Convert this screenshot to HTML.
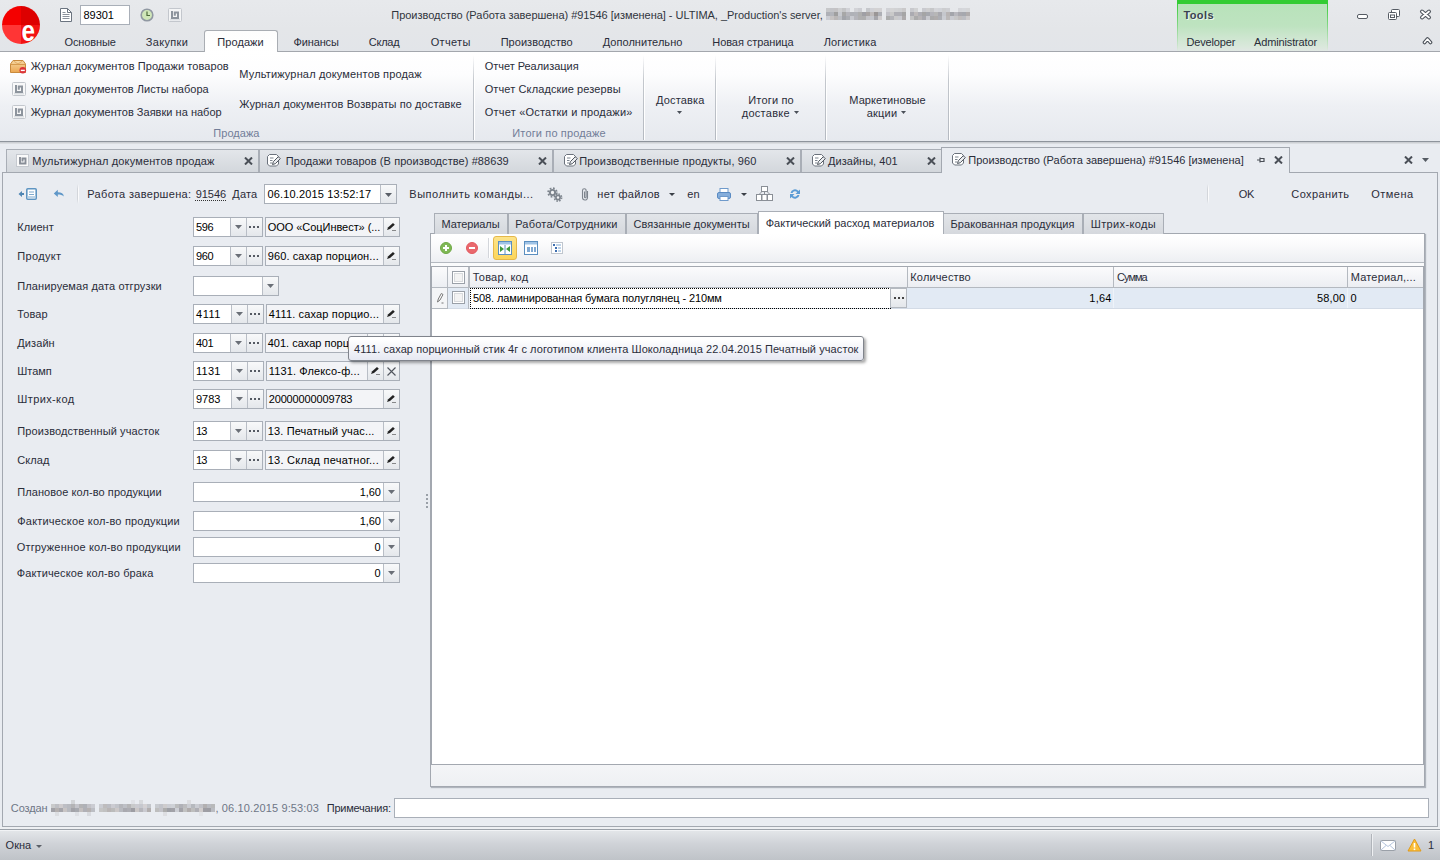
<!DOCTYPE html>
<html lang="ru"><head><meta charset="utf-8"><title>ULTIMA</title>
<style>
html,body{margin:0;padding:0;}
body{width:1440px;height:860px;overflow:hidden;background:#e9ecf1;font-family:"Liberation Sans",sans-serif;font-size:11px;color:#1e1e1e;}
#app{position:relative;width:1440px;height:860px;overflow:hidden;}
#app div,#app span,#app svg{position:absolute;box-sizing:border-box;}
.t{white-space:nowrap;line-height:13px;font-size:11px;}
.c{transform:translateX(-50%);}
.in{background:#fff;border:1px solid #a9afb8;}
.ro{background:#f3f4f7;border:1px solid #a9afb8;}
.btn{background:linear-gradient(#f8f9fa,#e4e7eb);border-left:1px solid #b9bec6;}

</style></head>
<body>
<div id="app">
<div style="left:0px;top:0px;width:1440px;height:52px;background:linear-gradient(#e7e9ec 0%,#e4e6e9 55%,#e2e5e9 100%);"></div>
<div style="left:1177px;top:0px;width:151px;height:52px;background:linear-gradient(#b7e2b9 0%,#bee3c0 50%,#dae8dc 90%,#e2e7e5 100%);"></div>
<div style="left:1177px;top:0px;width:151px;height:4px;background:#33cc33;"></div>
<span class="t" style="left:1183.5px;top:9px;letter-spacing:0.371px;font-weight:bold;color:#3a4350;text-shadow:1px 1px 0 rgba(255,255,255,0.75);">Tools</span>
<div style="left:1177px;top:4px;width:1px;height:47px;background:linear-gradient(#3ccc3c,rgba(120,210,120,0.5) 60%,rgba(200,230,200,0));"></div>
<div style="left:1327px;top:4px;width:1px;height:47px;background:linear-gradient(#3ccc3c,rgba(120,210,120,0.5) 60%,rgba(200,230,200,0));"></div>
<span class="t" style="left:1186.5px;top:36px;letter-spacing:-0.154px;color:#2a2d3a">Developer</span>
<span class="t" style="left:1254px;top:36px;letter-spacing:-0.141px;color:#2a2d3a">Administrator</span>
<div style="left:0px;top:51px;width:1440px;height:1px;background:#a3a7ad;"></div>
<svg style="left:1px;top:5px" width="40" height="40" viewBox="0 0 40 40"><defs><clipPath id="cc"><circle cx="20" cy="20" r="19"/></clipPath></defs>
<g clip-path="url(#cc)"><rect x="0" y="0" width="20" height="20" fill="#f40000"/><rect x="20" y="0" width="20" height="20" fill="#dd0000"/>
<rect x="0" y="20" width="20" height="20" fill="#ff3535"/><rect x="20" y="20" width="20" height="20" fill="#f21313"/>
<text x="20.500" y="35.500" font-family="Liberation Sans, sans-serif" font-size="29" font-weight="bold" fill="#fff" textLength="13.500" lengthAdjust="spacingAndGlyphs">e</text></g></svg>
<svg style="left:59px;top:7px" width="14" height="16" viewBox="0 0 14 16"><path d="M1.5 1.5h7l4 4v9h-11z" fill="#fff" stroke="#6b7480"/><path d="M8.5 1.5v4h4" fill="none" stroke="#6b7480"/><path d="M3.5 7.5h7M3.5 9.5h7M3.5 11.5h7M3.5 5.5h3" stroke="#8a919b"/></svg>
<div class="in" style="left:80px;top:5px;width:50px;height:20px;"></div>
<span class="t" style="left:83.5px;top:9px;letter-spacing:-0.046px;color:#000;">89301</span>
<svg style="left:140px;top:8px" width="14" height="14" viewBox="0 0 14 14"><circle cx="7" cy="7" r="5.800" fill="#cfe6b8" stroke="#9098a2" stroke-width="1.600"/><path d="M7 3.500v4h3" fill="none" stroke="#4d6b3a" stroke-width="1.200"/></svg>
<svg style="left:168px;top:8px" width="14" height="14" viewBox="0 0 14 14"><rect x="0.5" y="0.5" width="13" height="13" rx="1" fill="#f4f5f6" stroke="#c3c7cd"/><rect x="2" y="10.500" width="10" height="2" fill="#dcdfe3"/><path d="M4 3v7h6v-5.500h-3.200v3.200" fill="none" stroke="#8d949d" stroke-width="2"/></svg>
<span class="t" style="left:391.3px;top:9px;letter-spacing:-0.028px;color:#30353d;">Производство (Работа завершена) #91546 [изменена] - ULTIMA, _Production's server,</span>
<svg style="left:826px;top:8px" width="144" height="12" viewBox="0 0 144 12"><rect x="0" y="0" width="4" height="4" fill="rgb(198,199,201)"/><rect x="4" y="0" width="4" height="4" fill="rgb(195,196,200)"/><rect x="8" y="0" width="4" height="4" fill="rgb(196,195,197)"/><rect x="12" y="0" width="4" height="4" fill="rgb(206,207,209)"/><rect x="16" y="0" width="4" height="4" fill="rgb(196,197,199)"/><rect x="20" y="0" width="4" height="4" fill="rgb(209,210,215)"/><rect x="28" y="0" width="4" height="4" fill="rgb(210,211,215)"/><rect x="32" y="0" width="4" height="4" fill="rgb(204,205,210)"/><rect x="40" y="0" width="4" height="4" fill="rgb(197,199,203)"/><rect x="44" y="0" width="4" height="4" fill="rgb(208,209,214)"/><rect x="48" y="0" width="4" height="4" fill="rgb(211,210,211)"/><rect x="52" y="0" width="4" height="4" fill="rgb(211,210,212)"/><rect x="60" y="0" width="4" height="4" fill="rgb(209,210,214)"/><rect x="64" y="0" width="4" height="4" fill="rgb(212,212,213)"/><rect x="68" y="0" width="4" height="4" fill="rgb(209,210,212)"/><rect x="72" y="0" width="4" height="4" fill="rgb(207,208,210)"/><rect x="76" y="0" width="4" height="4" fill="rgb(202,201,202)"/><rect x="84" y="0" width="4" height="4" fill="rgb(200,201,205)"/><rect x="88" y="0" width="4" height="4" fill="rgb(209,210,211)"/><rect x="96" y="0" width="4" height="4" fill="rgb(201,202,207)"/><rect x="100" y="0" width="4" height="4" fill="rgb(206,206,207)"/><rect x="104" y="0" width="4" height="4" fill="rgb(198,199,201)"/><rect x="108" y="0" width="4" height="4" fill="rgb(212,213,217)"/><rect x="112" y="0" width="4" height="4" fill="rgb(209,211,216)"/><rect x="116" y="0" width="4" height="4" fill="rgb(204,205,207)"/><rect x="120" y="0" width="4" height="4" fill="rgb(206,207,211)"/><rect x="132" y="0" width="4" height="4" fill="rgb(212,213,217)"/><rect x="136" y="0" width="4" height="4" fill="rgb(213,215,219)"/><rect x="140" y="0" width="4" height="4" fill="rgb(213,214,216)"/><rect x="0" y="4" width="4" height="4" fill="rgb(174,176,182)"/><rect x="4" y="4" width="4" height="4" fill="rgb(179,181,187)"/><rect x="8" y="4" width="4" height="4" fill="rgb(159,159,159)"/><rect x="12" y="4" width="4" height="4" fill="rgb(199,201,207)"/><rect x="16" y="4" width="4" height="4" fill="rgb(167,167,167)"/><rect x="20" y="4" width="4" height="4" fill="rgb(181,181,187)"/><rect x="24" y="4" width="4" height="4" fill="rgb(175,177,183)"/><rect x="28" y="4" width="4" height="4" fill="rgb(177,179,185)"/><rect x="32" y="4" width="4" height="4" fill="rgb(174,174,174)"/><rect x="36" y="4" width="4" height="4" fill="rgb(159,159,165)"/><rect x="40" y="4" width="4" height="4" fill="rgb(168,164,164)"/><rect x="44" y="4" width="4" height="4" fill="rgb(191,187,187)"/><rect x="48" y="4" width="4" height="4" fill="rgb(154,150,150)"/><rect x="52" y="4" width="4" height="4" fill="rgb(173,175,181)"/><rect x="60" y="4" width="4" height="4" fill="rgb(194,194,200)"/><rect x="64" y="4" width="4" height="4" fill="rgb(201,201,201)"/><rect x="68" y="4" width="4" height="4" fill="rgb(175,175,181)"/><rect x="72" y="4" width="4" height="4" fill="rgb(175,175,181)"/><rect x="76" y="4" width="4" height="4" fill="rgb(165,165,165)"/><rect x="84" y="4" width="4" height="4" fill="rgb(171,171,177)"/><rect x="88" y="4" width="4" height="4" fill="rgb(190,186,186)"/><rect x="92" y="4" width="4" height="4" fill="rgb(173,173,179)"/><rect x="96" y="4" width="4" height="4" fill="rgb(165,165,165)"/><rect x="100" y="4" width="4" height="4" fill="rgb(166,168,174)"/><rect x="104" y="4" width="4" height="4" fill="rgb(180,180,186)"/><rect x="108" y="4" width="4" height="4" fill="rgb(183,183,183)"/><rect x="112" y="4" width="4" height="4" fill="rgb(169,169,175)"/><rect x="116" y="4" width="4" height="4" fill="rgb(197,199,205)"/><rect x="120" y="4" width="4" height="4" fill="rgb(184,180,180)"/><rect x="124" y="4" width="4" height="4" fill="rgb(163,165,171)"/><rect x="128" y="4" width="4" height="4" fill="rgb(184,184,190)"/><rect x="132" y="4" width="4" height="4" fill="rgb(169,169,175)"/><rect x="136" y="4" width="4" height="4" fill="rgb(166,168,174)"/><rect x="140" y="4" width="4" height="4" fill="rgb(176,172,172)"/><rect x="0" y="8" width="4" height="4" fill="rgb(203,205,211)"/><rect x="4" y="8" width="4" height="4" fill="rgb(198,195,195)"/><rect x="8" y="8" width="4" height="4" fill="rgb(186,183,183)"/><rect x="12" y="8" width="4" height="4" fill="rgb(188,190,195)"/><rect x="16" y="8" width="4" height="4" fill="rgb(162,164,170)"/><rect x="20" y="8" width="4" height="4" fill="rgb(172,174,179)"/><rect x="24" y="8" width="4" height="4" fill="rgb(200,202,208)"/><rect x="28" y="8" width="4" height="4" fill="rgb(181,181,187)"/><rect x="32" y="8" width="4" height="4" fill="rgb(175,175,176)"/><rect x="36" y="8" width="4" height="4" fill="rgb(174,174,175)"/><rect x="40" y="8" width="4" height="4" fill="rgb(195,195,200)"/><rect x="44" y="8" width="4" height="4" fill="rgb(196,198,204)"/><rect x="48" y="8" width="4" height="4" fill="rgb(166,166,171)"/><rect x="52" y="8" width="4" height="4" fill="rgb(207,204,205)"/><rect x="60" y="8" width="4" height="4" fill="rgb(172,173,173)"/><rect x="64" y="8" width="4" height="4" fill="rgb(179,180,185)"/><rect x="68" y="8" width="4" height="4" fill="rgb(202,202,203)"/><rect x="72" y="8" width="4" height="4" fill="rgb(201,202,207)"/><rect x="76" y="8" width="4" height="4" fill="rgb(173,170,171)"/><rect x="84" y="8" width="4" height="4" fill="rgb(195,195,195)"/><rect x="88" y="8" width="4" height="4" fill="rgb(171,171,171)"/><rect x="92" y="8" width="4" height="4" fill="rgb(183,180,181)"/><rect x="96" y="8" width="4" height="4" fill="rgb(168,168,174)"/><rect x="100" y="8" width="4" height="4" fill="rgb(200,201,206)"/><rect x="104" y="8" width="4" height="4" fill="rgb(170,170,171)"/><rect x="108" y="8" width="4" height="4" fill="rgb(175,172,172)"/><rect x="112" y="8" width="4" height="4" fill="rgb(172,174,180)"/><rect x="116" y="8" width="4" height="4" fill="rgb(202,204,210)"/><rect x="120" y="8" width="4" height="4" fill="rgb(187,184,184)"/><rect x="124" y="8" width="4" height="4" fill="rgb(201,203,209)"/><rect x="128" y="8" width="4" height="4" fill="rgb(199,199,200)"/><rect x="132" y="8" width="4" height="4" fill="rgb(192,189,189)"/><rect x="136" y="8" width="4" height="4" fill="rgb(189,190,195)"/><rect x="140" y="8" width="4" height="4" fill="rgb(206,203,204)"/></svg>
<svg style="left:1356px;top:8px" width="80" height="14" viewBox="0 0 80 14"><rect x="1.500" y="6.5" width="10" height="4" rx="1.5" fill="#fff" stroke="#555b63"/>
<rect x="35.5" y="1.5" width="8" height="7" rx="1" fill="#fff" stroke="#555b63"/><rect x="32.5" y="4.5" width="8" height="7" rx="1" fill="#fff" stroke="#555b63"/><rect x="34.5" y="7" width="4" height="2.500" fill="none" stroke="#555b63"/>
<path d="M66 3.500l7 6M73 3.500l-7 6" fill="none" stroke="#4f555d" stroke-width="4" stroke-linecap="round"/><path d="M66 3.500l7 6M73 3.500l-7 6" fill="none" stroke="#fff" stroke-width="1.800" stroke-linecap="round"/></svg>
<svg style="left:1422px;top:36px" width="11" height="9" viewBox="0 0 11 9"><path d="M2.500 6.500l3-3.500 3 3.500" fill="none" stroke="#4a5058" stroke-width="3.600" stroke-linecap="round" stroke-linejoin="round"/><path d="M2.500 6.500l3-3.500 3 3.500" fill="none" stroke="#fff" stroke-width="1.500" stroke-linecap="round" stroke-linejoin="round"/></svg>
<div style="left:204px;top:30px;width:74px;height:23px;border:1px solid #a9adb3;border-bottom:none;border-radius:3px 3px 0 0;background:linear-gradient(#fdfdfd,#fff);"></div>
<span class="t" style="left:64.5px;top:36px;letter-spacing:-0.113px;color:#2a2d3a">Основные</span>
<span class="t" style="left:145.8px;top:36px;letter-spacing:0.315px;color:#2a2d3a">Закупки</span>
<span class="t" style="left:217.3px;top:36px;letter-spacing:0.077px;color:#2a2d3a">Продажи</span>
<span class="t" style="left:293.5px;top:36px;letter-spacing:-0.130px;color:#2a2d3a">Финансы</span>
<span class="t" style="left:368.7px;top:36px;letter-spacing:-0.209px;color:#2a2d3a">Склад</span>
<span class="t" style="left:430.7px;top:36px;letter-spacing:0.336px;color:#2a2d3a">Отчеты</span>
<span class="t" style="left:500.7px;top:36px;letter-spacing:0.026px;color:#2a2d3a">Производство</span>
<span class="t" style="left:602.7px;top:36px;letter-spacing:0.044px;color:#2a2d3a">Дополнительно</span>
<span class="t" style="left:712.3px;top:36px;letter-spacing:-0.071px;color:#2a2d3a">Новая страница</span>
<span class="t" style="left:823.7px;top:36px;letter-spacing:0.169px;color:#2a2d3a">Логистика</span>
<div style="left:0px;top:52px;width:1440px;height:89px;background:linear-gradient(#ffffff 0%,#fdfdfe 25%,#eef0f4 60%,#e6e9ee 100%);"></div>
<div style="left:0px;top:141px;width:1440px;height:1px;background:#8e949c;"></div>
<div style="left:0px;top:142px;width:1440px;height:2px;background:linear-gradient(#c5c8cd,#e1e4e8);"></div>
<div style="left:473px;top:55px;width:1px;height:85px;background:linear-gradient(rgba(190,195,202,0),#c3c7cd 30%,#b4b9c0 100%);"></div>
<div style="left:474px;top:55px;width:1px;height:85px;background:linear-gradient(rgba(255,255,255,0),#fff 30%);"></div>
<div style="left:643px;top:55px;width:1px;height:85px;background:linear-gradient(rgba(190,195,202,0),#c3c7cd 30%,#b4b9c0 100%);"></div>
<div style="left:644px;top:55px;width:1px;height:85px;background:linear-gradient(rgba(255,255,255,0),#fff 30%);"></div>
<div style="left:715px;top:55px;width:1px;height:85px;background:linear-gradient(rgba(190,195,202,0),#c3c7cd 30%,#b4b9c0 100%);"></div>
<div style="left:716px;top:55px;width:1px;height:85px;background:linear-gradient(rgba(255,255,255,0),#fff 30%);"></div>
<div style="left:825px;top:55px;width:1px;height:85px;background:linear-gradient(rgba(190,195,202,0),#c3c7cd 30%,#b4b9c0 100%);"></div>
<div style="left:826px;top:55px;width:1px;height:85px;background:linear-gradient(rgba(255,255,255,0),#fff 30%);"></div>
<div style="left:948px;top:55px;width:1px;height:85px;background:linear-gradient(rgba(190,195,202,0),#c3c7cd 30%,#b4b9c0 100%);"></div>
<div style="left:949px;top:55px;width:1px;height:85px;background:linear-gradient(rgba(255,255,255,0),#fff 30%);"></div>
<svg style="left:10px;top:59px" width="17" height="15" viewBox="0 0 17 15"><defs><linearGradient id="bx" x1="0" y1="0" x2="0" y2="1"><stop offset="0" stop-color="#f7d9a4"/><stop offset="1" stop-color="#eba650"/></linearGradient></defs>
<path d="M0.500 5l2.500-3.500h10l2.500 3.500v8.500h-15z" fill="url(#bx)" stroke="#c98a3c"/><path d="M0.500 5.500h15" stroke="#d59a4e"/><path d="M3.500 2l4.500 3 4.500-3" fill="none" stroke="#dba35a" stroke-width="0.800"/>
<circle cx="12.800" cy="11.300" r="3.300" fill="#dc3338"/><rect x="10.800" y="10.700" width="4" height="1.400" fill="#fff"/></svg>
<svg style="left:12px;top:82px" width="14" height="14" viewBox="0 0 14 14"><rect x="0.5" y="0.5" width="13" height="13" rx="1" fill="#f8f8f9" stroke="#c3c7cd"/><rect x="2" y="10.500" width="10" height="2" fill="#dcdfe3"/><path d="M4 3v7h6v-5.500h-3.200v3.200" fill="none" stroke="#8d949d" stroke-width="2"/></svg>
<svg style="left:12px;top:105px" width="14" height="14" viewBox="0 0 14 14"><rect x="0.5" y="0.5" width="13" height="13" rx="1" fill="#f8f8f9" stroke="#c3c7cd"/><rect x="2" y="10.500" width="10" height="2" fill="#dcdfe3"/><path d="M4 3v7h6v-5.500h-3.200v3.200" fill="none" stroke="#8d949d" stroke-width="2"/></svg>
<span class="t" style="left:30.7px;top:60px;letter-spacing:0.073px;color:#2a2d3a">Журнал документов Продажи товаров</span>
<span class="t" style="left:30.7px;top:83px;letter-spacing:0.019px;color:#2a2d3a">Журнал документов Листы набора</span>
<span class="t" style="left:30.7px;top:106px;letter-spacing:0.023px;color:#2a2d3a">Журнал документов Заявки на набор</span>
<span class="t" style="left:239.3px;top:68px;letter-spacing:0.150px;color:#2a2d3a">Мультижурнал документов продаж</span>
<span class="t" style="left:239.3px;top:98px;letter-spacing:0.091px;color:#2a2d3a">Журнал документов Возвраты по доставке</span>
<span class="t" style="left:213.3px;top:127px;letter-spacing:0.032px;color:#727d98">Продажа</span>
<span class="t" style="left:484.7px;top:60px;letter-spacing:-0.026px;color:#2a2d3a">Отчет Реализация</span>
<span class="t" style="left:484.7px;top:83px;letter-spacing:0.112px;color:#2a2d3a">Отчет Складские резервы</span>
<span class="t" style="left:484.7px;top:106px;letter-spacing:0.217px;color:#2a2d3a">Отчет «Остатки и продажи»</span>
<span class="t" style="left:512.3px;top:127px;letter-spacing:0.144px;color:#727d98">Итоги по продаже</span>
<span class="t" style="left:656px;top:94px;letter-spacing:0.166px;color:#2a2d3a">Доставка</span>
<span class="t" style="left:748.3px;top:94px;letter-spacing:0.168px;color:#2a2d3a">Итоги по</span>
<span class="t" style="left:741.7px;top:107px;letter-spacing:0.291px;color:#2a2d3a">доставке</span>
<span class="t" style="left:849.3px;top:94px;letter-spacing:0.086px;color:#2a2d3a">Маркетиновые</span>
<span class="t" style="left:866.7px;top:107px;letter-spacing:0.220px;color:#2a2d3a">акции</span>
<svg style="left:677px;top:111px" width="5" height="3" viewBox="0 0 5 3"><path d="M0 0h5l-2.5 3z" fill="#4a5058"/></svg>
<svg style="left:794px;top:111px" width="5" height="3" viewBox="0 0 5 3"><path d="M0 0h5l-2.5 3z" fill="#4a5058"/></svg>
<svg style="left:901px;top:111px" width="5" height="3" viewBox="0 0 5 3"><path d="M0 0h5l-2.5 3z" fill="#4a5058"/></svg>
<div style="left:6px;top:149px;width:253px;height:23px;background:linear-gradient(#e3e6ea,#d3d7dc);border:1px solid #a9aeb6;border-bottom:none;"></div>
<div style="left:259px;top:149px;width:294px;height:23px;background:linear-gradient(#e3e6ea,#d3d7dc);border:1px solid #a9aeb6;border-bottom:none;"></div>
<div style="left:553px;top:149px;width:248px;height:23px;background:linear-gradient(#e3e6ea,#d3d7dc);border:1px solid #a9aeb6;border-bottom:none;"></div>
<div style="left:801px;top:149px;width:141px;height:23px;background:linear-gradient(#e3e6ea,#d3d7dc);border:1px solid #a9aeb6;border-bottom:none;"></div>
<div style="left:2px;top:172px;width:1436px;height:655px;background:#e9ecf1;border:1px solid #a3a8b0;"></div>
<div style="left:941px;top:147px;width:349px;height:26px;background:#e9ecf1;border:1px solid #a3a8b0;border-bottom:none;"></div>
<svg style="left:16px;top:154px" width="13" height="13" viewBox="0 0 13 13"><rect x="0.5" y="0.5" width="12" height="12" fill="#fafafa" stroke="#c5c9cf"/><path d="M4 3v6.500h5.500v-5h-3v3" fill="none" stroke="#888e97" stroke-width="1.900"/></svg>
<span class="t" style="left:32.3px;top:155px;letter-spacing:0.140px;color:#2a2d3a">Мультижурнал документов продаж</span>
<svg style="left:244px;top:157px" width="9" height="8" viewBox="0 0 9 8"><path d="M1 0.500l7 7M8 0.500l-7 7" stroke="#4a4f57" stroke-width="2"/></svg>
<svg style="left:266px;top:153px" width="15" height="14" viewBox="0 0 15 14"><path d="M3.500 1.500h7l2 2v7.500l-2 2h-7l-2-2v-7.500z" fill="#fff" stroke="#6b727c"/><path d="M4 5h3.500M4 7.500h2.500M4 10h2" stroke="#7d858f"/>
<path d="M6.500 11.500l0.800-2.800 5-5 2 2-5 5z" fill="#e9ebee" stroke="#4f565f"/></svg>
<span class="t" style="left:285.7px;top:155px;letter-spacing:0.073px;color:#2a2d3a">Продажи товаров (В производстве) #88639</span>
<svg style="left:538px;top:157px" width="9" height="8" viewBox="0 0 9 8"><path d="M1 0.500l7 7M8 0.500l-7 7" stroke="#4a4f57" stroke-width="2"/></svg>
<svg style="left:563px;top:153px" width="15" height="14" viewBox="0 0 15 14"><path d="M3.500 1.500h7l2 2v7.500l-2 2h-7l-2-2v-7.500z" fill="#fff" stroke="#6b727c"/><path d="M4 5h3.500M4 7.500h2.500M4 10h2" stroke="#7d858f"/>
<path d="M6.500 11.500l0.800-2.800 5-5 2 2-5 5z" fill="#e9ebee" stroke="#4f565f"/></svg>
<span class="t" style="left:579.3px;top:155px;letter-spacing:0.136px;color:#2a2d3a">Производственные продукты, 960</span>
<svg style="left:786px;top:157px" width="9" height="8" viewBox="0 0 9 8"><path d="M1 0.500l7 7M8 0.500l-7 7" stroke="#4a4f57" stroke-width="2"/></svg>
<svg style="left:811px;top:153px" width="15" height="14" viewBox="0 0 15 14"><path d="M3.500 1.500h7l2 2v7.500l-2 2h-7l-2-2v-7.500z" fill="#fff" stroke="#6b727c"/><path d="M4 5h3.500M4 7.500h2.500M4 10h2" stroke="#7d858f"/>
<path d="M6.500 11.500l0.800-2.800 5-5 2 2-5 5z" fill="#e9ebee" stroke="#4f565f"/></svg>
<span class="t" style="left:828px;top:155px;letter-spacing:0.032px;color:#2a2d3a">Дизайны, 401</span>
<svg style="left:927px;top:157px" width="9" height="8" viewBox="0 0 9 8"><path d="M1 0.500l7 7M8 0.500l-7 7" stroke="#4a4f57" stroke-width="2"/></svg>
<svg style="left:951px;top:152px" width="15" height="14" viewBox="0 0 15 14"><path d="M3.500 1.500h7l2 2v7.500l-2 2h-7l-2-2v-7.500z" fill="#fff" stroke="#6b727c"/><path d="M4 5h3.500M4 7.500h2.500M4 10h2" stroke="#7d858f"/>
<path d="M6.500 11.500l0.800-2.800 5-5 2 2-5 5z" fill="#e9ebee" stroke="#4f565f"/></svg>
<span class="t" style="left:968.3px;top:154px;letter-spacing:-0.010px;color:#2a2d3a">Производство (Работа завершена) #91546 [изменена]</span>
<svg style="left:1256px;top:156px" width="9" height="8" viewBox="0 0 9 8"><path d="M1 4h3M4 1.500v5M4 2.500h4v3h-4" fill="none" stroke="#4a4f57" stroke-width="1.200"/></svg>
<svg style="left:1274px;top:156px" width="9" height="8" viewBox="0 0 9 8"><path d="M1 0.500l7 7M8 0.500l-7 7" stroke="#4a4f57" stroke-width="2"/></svg>
<svg style="left:1404px;top:156px" width="9" height="8" viewBox="0 0 9 8"><path d="M1 0.500l7 7M8 0.500l-7 7" stroke="#4a4f57" stroke-width="2"/></svg>
<svg style="left:1422px;top:158px" width="7" height="4" viewBox="0 0 7 4"><path d="M0 0h7l-3.5 4z" fill="#555b63"/></svg>
<svg style="left:18px;top:187px" width="20" height="14" viewBox="0 0 20 14"><path d="M0.500 7l3.500-3v2h2v2h-2v2z" fill="#4f86b4"/><rect x="8.800" y="1.800" width="9.400" height="10.400" rx="1" fill="#fff" stroke="#5f95c2" stroke-width="1.600"/><rect x="9.600" y="9" width="7.800" height="2.500" fill="#bdd4e7"/><path d="M11 5h5M11 7.500h5" stroke="#7fa9cd" stroke-width="1.200"/></svg>
<svg style="left:53px;top:189px" width="12" height="10" viewBox="0 0 12 10"><path d="M0.800 4.500l4-3.800v2.600c3.600 0 5.800 1.400 6 4.200-1.500-1.700-3.300-2.100-6-2.100v2.700z" fill="#5f97c8"/></svg>
<div style="left:77px;top:184px;width:1px;height:20px;background:linear-gradient(rgba(208,212,217,0),#d3d6db 25%,#d3d6db 75%,rgba(208,212,217,0));"></div>
<div style="left:78px;top:184px;width:1px;height:20px;background:linear-gradient(rgba(255,255,255,0),#fbfbfc 25%,#fbfbfc 75%,rgba(255,255,255,0));"></div>
<span class="t" style="left:87.3px;top:188px;letter-spacing:0.321px;color:#2b2b38;">Работа завершена:</span>
<span class="t" style="left:195.7px;top:188px;letter-spacing:-0.046px;color:#2b2b38;">91546</span>
<div style="left:195px;top:200px;width:31px;height:1px;border-top:1px dotted #333;"></div>
<span class="t" style="left:232.3px;top:188px;letter-spacing:0.148px;color:#2b2b38;">Дата</span>
<div class="in" style="left:264px;top:184px;width:133px;height:20px;"></div>
<div class="btn" style="left:380px;top:185px;width:16px;height:18px;"></div>
<svg style="left:385px;top:193px" width="7" height="4" viewBox="0 0 7 4"><path d="M0 0h7l-3.5 4z" fill="#5a5f67"/></svg>
<span class="t" style="left:267.5px;top:188px;letter-spacing:0.154px;color:#000;">06.10.2015 13:52:17</span>
<span class="t" style="left:409.3px;top:188px;letter-spacing:0.524px;color:#2b2b38;">Выполнить команды...</span>
<span class="t" style="left:597.3px;top:188px;letter-spacing:0.296px;color:#2b2b38;">нет файлов</span>
<svg style="left:669px;top:193px" width="6" height="3" viewBox="0 0 6 3"><path d="M0 0h6l-3.0 3z" fill="#3a3f47"/></svg>
<span class="t" style="left:687.3px;top:188px;letter-spacing:0.166px;color:#2b2b38;">en</span>
<svg style="left:741px;top:193px" width="6" height="3" viewBox="0 0 6 3"><path d="M0 0h6l-3.0 3z" fill="#3a3f47"/></svg>
<svg style="left:547px;top:187px" width="16" height="15" viewBox="0 0 16 15"><circle cx="5.500" cy="5.500" r="4.300" fill="none" stroke="#7d848d" stroke-width="1.800" stroke-dasharray="1.700 1.680"/><circle cx="5.500" cy="5.500" r="2.600" fill="#f2f3f5" stroke="#7d848d" stroke-width="1.900"/><circle cx="11" cy="10.500" r="3.600" fill="none" stroke="#7d848d" stroke-width="1.600" stroke-dasharray="1.500 1.330"/><circle cx="11" cy="10.500" r="2.100" fill="#f2f3f5" stroke="#7d848d" stroke-width="1.700"/></svg>
<svg style="left:581px;top:187px" width="8" height="15" viewBox="0 0 8 15"><path d="M6.500 4v6.500a2.500 2.500 0 0 1-5 0v-7a1.800 1.800 0 0 1 3.600 0v6.500a0.800 0.800 0 0 1-1.600 0v-5.500" fill="none" stroke="#7d848d" stroke-width="1.100"/></svg>
<svg style="left:716px;top:187px" width="16" height="15" viewBox="0 0 16 15"><rect x="4" y="1.500" width="8" height="5" fill="#fff" stroke="#6f9acb"/><rect x="1.500" y="5.500" width="13" height="6" rx="1.500" fill="#86aedb" stroke="#5a8bc3"/><rect x="4" y="9.500" width="8" height="4" fill="#fff" stroke="#6f9acb"/></svg>
<svg style="left:756px;top:186px" width="18" height="16" viewBox="0 0 18 16"><rect x="5.500" y="0.500" width="6" height="5" fill="#fff" stroke="#8a8f96"/><rect x="0.500" y="8.500" width="5" height="6" fill="#fff" stroke="#8a8f96"/><rect x="6" y="8.500" width="5" height="6" fill="#fff" stroke="#8a8f96"/><rect x="11.500" y="8.500" width="5" height="6" fill="#fff" stroke="#8a8f96"/><path d="M8.500 5.500v3M3 8.500l3-3M14 8.500l-3-3" stroke="#8a8f96" fill="none"/></svg>
<svg style="left:789px;top:188px" width="12" height="12" viewBox="0 0 12 12"><path d="M1.500 5a4.500 4.500 0 0 1 8-2l1.500-1.500v4.500h-4.500l1.700-1.700a2.800 2.800 0 0 0-4.700 0.700z" fill="#5b9bd5"/><path d="M10.500 7a4.500 4.500 0 0 1-8 2l-1.500 1.500v-4.500h4.500l-1.700 1.700a2.800 2.800 0 0 0 4.700-0.700z" fill="#5b9bd5"/></svg>
<div style="left:1207px;top:184px;width:1px;height:20px;background:linear-gradient(rgba(208,212,217,0),#d3d6db 25%,#d3d6db 75%,rgba(208,212,217,0));"></div>
<div style="left:1208px;top:184px;width:1px;height:20px;background:linear-gradient(rgba(255,255,255,0),#fbfbfc 25%,#fbfbfc 75%,rgba(255,255,255,0));"></div>
<span class="t" style="left:1238.7px;top:188px;letter-spacing:-0.194px;color:#2b2b38;">OK</span>
<span class="t" style="left:1291.3px;top:188px;letter-spacing:0.392px;color:#2b2b38;">Сохранить</span>
<span class="t" style="left:1371.3px;top:188px;letter-spacing:0.467px;color:#2b2b38;">Отмена</span>
<span class="t" style="left:17.3px;top:221px;letter-spacing:0.040px;color:#2a2d3a">Клиент</span>
<div class="in" style="left:193px;top:217px;width:70px;height:20px;"></div>
<div class="btn" style="left:230px;top:218px;width:16px;height:18px;"></div>
<svg style="left:235px;top:225px" width="7" height="4" viewBox="0 0 7 4"><path d="M0 0h7l-3.5 4z" fill="#6a6f77"/></svg>
<div class="btn" style="left:246px;top:218px;width:16px;height:18px;"></div>
<svg style="left:249px;top:226px" width="10" height="2" viewBox="0 0 10 2"><rect x="0" y="0" width="2" height="2" fill="#555a63"/><rect x="4" y="0" width="2" height="2" fill="#555a63"/><rect x="8" y="0" width="2" height="2" fill="#555a63"/></svg>
<span class="t" style="left:196px;top:221px;letter-spacing:-0.326px;color:#000;">596</span>
<div class="ro" style="left:265px;top:217px;width:135px;height:20px;"></div>
<span class="t" style="left:267.7px;top:221px;letter-spacing:-0.045px;color:#000;">ООО «СоцИнвест» (...</span>
<div class="btn" style="left:383px;top:218px;width:16px;height:18px;"></div>
<svg style="left:386px;top:222px" width="11" height="10" viewBox="0 0 11 10"><path d="M1 8l1.200-2.800 4.800-4.200 1.800 1.800-4.800 4.200z" fill="#222"/><path d="M6.500 8.500h1M8.500 8.500h1" stroke="#222"/></svg>
<span class="t" style="left:17.3px;top:250px;letter-spacing:0.335px;color:#2a2d3a">Продукт</span>
<div class="in" style="left:193px;top:246px;width:70px;height:20px;"></div>
<div class="btn" style="left:230px;top:247px;width:16px;height:18px;"></div>
<svg style="left:235px;top:254px" width="7" height="4" viewBox="0 0 7 4"><path d="M0 0h7l-3.5 4z" fill="#6a6f77"/></svg>
<div class="btn" style="left:246px;top:247px;width:16px;height:18px;"></div>
<svg style="left:249px;top:255px" width="10" height="2" viewBox="0 0 10 2"><rect x="0" y="0" width="2" height="2" fill="#555a63"/><rect x="4" y="0" width="2" height="2" fill="#555a63"/><rect x="8" y="0" width="2" height="2" fill="#555a63"/></svg>
<span class="t" style="left:196px;top:250px;letter-spacing:-0.326px;color:#000;">960</span>
<div class="ro" style="left:265px;top:246px;width:135px;height:20px;"></div>
<span class="t" style="left:267.7px;top:250px;letter-spacing:0.113px;color:#000;">960. сахар порцион...</span>
<div class="btn" style="left:383px;top:247px;width:16px;height:18px;"></div>
<svg style="left:386px;top:251px" width="11" height="10" viewBox="0 0 11 10"><path d="M1 8l1.200-2.800 4.800-4.200 1.800 1.800-4.800 4.200z" fill="#222"/><path d="M6.500 8.500h1M8.500 8.500h1" stroke="#222"/></svg>
<span class="t" style="left:17.3px;top:280px;letter-spacing:0.115px;color:#2a2d3a">Планируемая дата отгрузки</span>
<div class="in" style="left:193px;top:276px;width:86px;height:20px;"></div>
<div class="btn" style="left:262px;top:277px;width:16px;height:18px;"></div>
<svg style="left:267px;top:284px" width="7" height="4" viewBox="0 0 7 4"><path d="M0 0h7l-3.5 4z" fill="#6a6f77"/></svg>
<span class="t" style="left:17.3px;top:308px;letter-spacing:0.117px;color:#2a2d3a">Товар</span>
<div class="in" style="left:193px;top:304px;width:71px;height:20px;"></div>
<div class="btn" style="left:231px;top:305px;width:16px;height:18px;"></div>
<svg style="left:236px;top:312px" width="7" height="4" viewBox="0 0 7 4"><path d="M0 0h7l-3.5 4z" fill="#6a6f77"/></svg>
<div class="btn" style="left:247px;top:305px;width:16px;height:18px;"></div>
<svg style="left:250px;top:313px" width="10" height="2" viewBox="0 0 10 2"><rect x="0" y="0" width="2" height="2" fill="#555a63"/><rect x="4" y="0" width="2" height="2" fill="#555a63"/><rect x="8" y="0" width="2" height="2" fill="#555a63"/></svg>
<span class="t" style="left:196px;top:308px;letter-spacing:0.521px;color:#000;">4111</span>
<div class="ro" style="left:266px;top:304px;width:134px;height:20px;"></div>
<span class="t" style="left:268.7px;top:308px;letter-spacing:0.162px;color:#000;">4111. сахар порцио...</span>
<div class="btn" style="left:383px;top:305px;width:16px;height:18px;"></div>
<svg style="left:386px;top:309px" width="11" height="10" viewBox="0 0 11 10"><path d="M1 8l1.200-2.800 4.800-4.200 1.800 1.800-4.800 4.200z" fill="#222"/><path d="M6.500 8.500h1M8.500 8.500h1" stroke="#222"/></svg>
<span class="t" style="left:17.3px;top:337px;letter-spacing:0.085px;color:#2a2d3a">Дизайн</span>
<div class="in" style="left:193px;top:333px;width:70px;height:20px;"></div>
<div class="btn" style="left:230px;top:334px;width:16px;height:18px;"></div>
<svg style="left:235px;top:341px" width="7" height="4" viewBox="0 0 7 4"><path d="M0 0h7l-3.5 4z" fill="#6a6f77"/></svg>
<div class="btn" style="left:246px;top:334px;width:16px;height:18px;"></div>
<svg style="left:249px;top:342px" width="10" height="2" viewBox="0 0 10 2"><rect x="0" y="0" width="2" height="2" fill="#555a63"/><rect x="4" y="0" width="2" height="2" fill="#555a63"/><rect x="8" y="0" width="2" height="2" fill="#555a63"/></svg>
<span class="t" style="left:196px;top:337px;letter-spacing:-0.326px;color:#000;">401</span>
<div class="ro" style="left:265px;top:333px;width:135px;height:20px;"></div>
<span class="t" style="left:267.7px;top:337px;color:#000;">401. сахар порц</span>
<div class="btn" style="left:367px;top:334px;width:16px;height:18px;"></div>
<svg style="left:370px;top:338px" width="11" height="10" viewBox="0 0 11 10"><path d="M1 8l1.200-2.800 4.800-4.200 1.800 1.800-4.800 4.200z" fill="#222"/><path d="M6.500 8.500h1M8.500 8.500h1" stroke="#222"/></svg>
<div class="btn" style="left:383px;top:334px;width:16px;height:18px;"></div>
<svg style="left:387px;top:339px" width="9" height="9" viewBox="0 0 9 9"><path d="M0.500 0.500l8 8M8.500 0.500l-8 8" stroke="#50555d" stroke-width="1.100"/></svg>
<span class="t" style="left:17.3px;top:365px;letter-spacing:-0.058px;color:#2a2d3a">Штамп</span>
<div class="in" style="left:193px;top:361px;width:71px;height:20px;"></div>
<div class="btn" style="left:231px;top:362px;width:16px;height:18px;"></div>
<svg style="left:236px;top:369px" width="7" height="4" viewBox="0 0 7 4"><path d="M0 0h7l-3.5 4z" fill="#6a6f77"/></svg>
<div class="btn" style="left:247px;top:362px;width:16px;height:18px;"></div>
<svg style="left:250px;top:370px" width="10" height="2" viewBox="0 0 10 2"><rect x="0" y="0" width="2" height="2" fill="#555a63"/><rect x="4" y="0" width="2" height="2" fill="#555a63"/><rect x="8" y="0" width="2" height="2" fill="#555a63"/></svg>
<span class="t" style="left:196px;top:365px;letter-spacing:0.249px;color:#000;">1131</span>
<div class="ro" style="left:266px;top:361px;width:134px;height:20px;"></div>
<span class="t" style="left:268.7px;top:365px;letter-spacing:0.140px;color:#000;">1131. Флексо-ф...</span>
<div class="btn" style="left:367px;top:362px;width:16px;height:18px;"></div>
<svg style="left:370px;top:366px" width="11" height="10" viewBox="0 0 11 10"><path d="M1 8l1.200-2.800 4.800-4.200 1.800 1.800-4.800 4.200z" fill="#222"/><path d="M6.500 8.500h1M8.500 8.500h1" stroke="#222"/></svg>
<div class="btn" style="left:383px;top:362px;width:16px;height:18px;"></div>
<svg style="left:387px;top:367px" width="9" height="9" viewBox="0 0 9 9"><path d="M0.500 0.500l8 8M8.500 0.500l-8 8" stroke="#50555d" stroke-width="1.100"/></svg>
<span class="t" style="left:17.3px;top:393px;letter-spacing:0.378px;color:#2a2d3a">Штрих-код</span>
<div class="in" style="left:193px;top:389px;width:71px;height:20px;"></div>
<div class="btn" style="left:231px;top:390px;width:16px;height:18px;"></div>
<svg style="left:236px;top:397px" width="7" height="4" viewBox="0 0 7 4"><path d="M0 0h7l-3.5 4z" fill="#6a6f77"/></svg>
<div class="btn" style="left:247px;top:390px;width:16px;height:18px;"></div>
<svg style="left:250px;top:398px" width="10" height="2" viewBox="0 0 10 2"><rect x="0" y="0" width="2" height="2" fill="#555a63"/><rect x="4" y="0" width="2" height="2" fill="#555a63"/><rect x="8" y="0" width="2" height="2" fill="#555a63"/></svg>
<span class="t" style="left:196px;top:393px;letter-spacing:-0.023px;color:#000;">9783</span>
<div class="ro" style="left:266px;top:389px;width:134px;height:20px;"></div>
<span class="t" style="left:268.7px;top:393px;letter-spacing:-0.142px;color:#000;">20000000009783</span>
<div class="btn" style="left:383px;top:390px;width:16px;height:18px;"></div>
<svg style="left:386px;top:394px" width="11" height="10" viewBox="0 0 11 10"><path d="M1 8l1.200-2.800 4.800-4.200 1.800 1.800-4.800 4.200z" fill="#222"/><path d="M6.500 8.500h1M8.500 8.500h1" stroke="#222"/></svg>
<span class="t" style="left:17.3px;top:425px;letter-spacing:0.106px;color:#2a2d3a">Производственный участок</span>
<div class="in" style="left:193px;top:421px;width:70px;height:20px;"></div>
<div class="btn" style="left:230px;top:422px;width:16px;height:18px;"></div>
<svg style="left:235px;top:429px" width="7" height="4" viewBox="0 0 7 4"><path d="M0 0h7l-3.5 4z" fill="#6a6f77"/></svg>
<div class="btn" style="left:246px;top:422px;width:16px;height:18px;"></div>
<svg style="left:249px;top:430px" width="10" height="2" viewBox="0 0 10 2"><rect x="0" y="0" width="2" height="2" fill="#555a63"/><rect x="4" y="0" width="2" height="2" fill="#555a63"/><rect x="8" y="0" width="2" height="2" fill="#555a63"/></svg>
<span class="t" style="left:196px;top:425px;letter-spacing:-0.834px;color:#000;">13</span>
<div class="ro" style="left:265px;top:421px;width:135px;height:20px;"></div>
<span class="t" style="left:267.7px;top:425px;letter-spacing:0.150px;color:#000;">13. Печатный учас...</span>
<div class="btn" style="left:383px;top:422px;width:16px;height:18px;"></div>
<svg style="left:386px;top:426px" width="11" height="10" viewBox="0 0 11 10"><path d="M1 8l1.200-2.800 4.800-4.200 1.800 1.800-4.800 4.200z" fill="#222"/><path d="M6.500 8.500h1M8.500 8.500h1" stroke="#222"/></svg>
<span class="t" style="left:17.3px;top:454px;letter-spacing:0.066px;color:#2a2d3a">Склад</span>
<div class="in" style="left:193px;top:450px;width:70px;height:20px;"></div>
<div class="btn" style="left:230px;top:451px;width:16px;height:18px;"></div>
<svg style="left:235px;top:458px" width="7" height="4" viewBox="0 0 7 4"><path d="M0 0h7l-3.5 4z" fill="#6a6f77"/></svg>
<div class="btn" style="left:246px;top:451px;width:16px;height:18px;"></div>
<svg style="left:249px;top:459px" width="10" height="2" viewBox="0 0 10 2"><rect x="0" y="0" width="2" height="2" fill="#555a63"/><rect x="4" y="0" width="2" height="2" fill="#555a63"/><rect x="8" y="0" width="2" height="2" fill="#555a63"/></svg>
<span class="t" style="left:196px;top:454px;letter-spacing:-0.834px;color:#000;">13</span>
<div class="ro" style="left:265px;top:450px;width:135px;height:20px;"></div>
<span class="t" style="left:267.7px;top:454px;letter-spacing:0.269px;color:#000;">13. Склад печатног...</span>
<div class="btn" style="left:383px;top:451px;width:16px;height:18px;"></div>
<svg style="left:386px;top:455px" width="11" height="10" viewBox="0 0 11 10"><path d="M1 8l1.200-2.800 4.800-4.200 1.800 1.800-4.800 4.200z" fill="#222"/><path d="M6.500 8.500h1M8.500 8.500h1" stroke="#222"/></svg>
<span class="t" style="left:17.3px;top:486px;letter-spacing:0.071px;color:#2a2d3a">Плановое кол-во продукции</span>
<div class="in" style="left:193px;top:482px;width:207px;height:20px;"></div>
<div class="btn" style="left:383px;top:483px;width:16px;height:18px;"></div>
<svg style="left:388px;top:490px" width="7" height="4" viewBox="0 0 7 4"><path d="M0 0h7l-3.5 4z" fill="#6a6f77"/></svg>
<span class="t" style="left:359.8px;top:486px;letter-spacing:-0.103px;color:#000;">1,60</span>
<span class="t" style="left:17.3px;top:515px;letter-spacing:0.191px;color:#2a2d3a">Фактическое кол-во продукции</span>
<div class="in" style="left:193px;top:511px;width:207px;height:20px;"></div>
<div class="btn" style="left:383px;top:512px;width:16px;height:18px;"></div>
<svg style="left:388px;top:519px" width="7" height="4" viewBox="0 0 7 4"><path d="M0 0h7l-3.5 4z" fill="#6a6f77"/></svg>
<span class="t" style="left:359.8px;top:515px;letter-spacing:-0.103px;color:#000;">1,60</span>
<span class="t" style="left:16.7px;top:541px;letter-spacing:0.178px;color:#2a2d3a">Отгруженное кол-во продукции</span>
<div class="in" style="left:193px;top:537px;width:207px;height:20px;"></div>
<div class="btn" style="left:383px;top:538px;width:16px;height:18px;"></div>
<svg style="left:388px;top:545px" width="7" height="4" viewBox="0 0 7 4"><path d="M0 0h7l-3.5 4z" fill="#6a6f77"/></svg>
<span class="t" style="left:374.38px;top:541px;color:#000;">0</span>
<span class="t" style="left:16.7px;top:567px;letter-spacing:0.132px;color:#2a2d3a">Фактическое кол-во брака</span>
<div class="in" style="left:193px;top:563px;width:207px;height:20px;"></div>
<div class="btn" style="left:383px;top:564px;width:16px;height:18px;"></div>
<svg style="left:388px;top:571px" width="7" height="4" viewBox="0 0 7 4"><path d="M0 0h7l-3.5 4z" fill="#6a6f77"/></svg>
<span class="t" style="left:374.38px;top:567px;color:#000;">0</span>
<div style="left:426px;top:494px;width:2px;height:2px;background:#9aa0a8;"></div>
<div style="left:426px;top:498px;width:2px;height:2px;background:#9aa0a8;"></div>
<div style="left:426px;top:502px;width:2px;height:2px;background:#9aa0a8;"></div>
<div style="left:426px;top:506px;width:2px;height:2px;background:#9aa0a8;"></div>
<div style="left:430px;top:233px;width:995px;height:554px;background:#fff;border:1px solid #a3a8b0;box-shadow:1px 1px 1px #b0b5bd;"></div>
<div style="left:431px;top:266px;width:1px;height:499px;background:#a3a8b0;"></div>
<div style="left:1423px;top:266px;width:1px;height:499px;background:#a3a8b0;"></div>
<div style="left:434px;top:213px;width:74px;height:21px;background:linear-gradient(#e2e5e9,#d5d8dd);border:1px solid #a9aeb6;border-bottom:none;"></div>
<span class="t" style="left:441.5px;top:218px;letter-spacing:-0.100px;color:#2a2d3a">Материалы</span>
<div style="left:508px;top:213px;width:118px;height:21px;background:linear-gradient(#e2e5e9,#d5d8dd);border:1px solid #a9aeb6;border-bottom:none;"></div>
<span class="t" style="left:515.2px;top:218px;letter-spacing:0.204px;color:#2a2d3a">Работа/Сотрудники</span>
<div style="left:626px;top:213px;width:132px;height:21px;background:linear-gradient(#e2e5e9,#d5d8dd);border:1px solid #a9aeb6;border-bottom:none;"></div>
<span class="t" style="left:633.5px;top:218px;letter-spacing:0.036px;color:#2a2d3a">Связанные документы</span>
<div style="left:943px;top:213px;width:140px;height:21px;background:linear-gradient(#e2e5e9,#d5d8dd);border:1px solid #a9aeb6;border-bottom:none;"></div>
<span class="t" style="left:950.5px;top:218px;letter-spacing:0.060px;color:#2a2d3a">Бракованная продукция</span>
<div style="left:1083px;top:213px;width:81px;height:21px;background:linear-gradient(#e2e5e9,#d5d8dd);border:1px solid #a9aeb6;border-bottom:none;"></div>
<span class="t" style="left:1090.7px;top:218px;letter-spacing:0.369px;color:#2a2d3a">Штрих-коды</span>
<div style="left:758px;top:211px;width:186px;height:24px;background:#fff;border:1px solid #a9aeb6;border-bottom:none;"></div>
<span class="t" style="left:765.7px;top:217px;letter-spacing:0.028px;color:#2a2d3a">Фактический расход материалов</span>
<div style="left:431px;top:234px;width:993px;height:28px;background:linear-gradient(#ffffff,#fbfbfc 35%,#edeff3);"></div>
<div style="left:431px;top:262px;width:993px;height:1px;background:#b4b9c0;"></div>
<div style="left:431px;top:263px;width:993px;height:3px;background:#fafbfc;"></div>
<svg style="left:440px;top:242px" width="12" height="12" viewBox="0 0 12 12"><circle cx="6" cy="6" r="5.500" fill="#80b856" stroke="#6ea945"/><path d="M6 3v6M3 6h6" stroke="#fff" stroke-width="2"/></svg>
<svg style="left:466px;top:242px" width="12" height="12" viewBox="0 0 12 12"><circle cx="6" cy="6" r="5.500" fill="#e9686d" stroke="#e2595f"/><path d="M3 6h6" stroke="#fff" stroke-width="2"/></svg>
<div style="left:488px;top:238px;width:1px;height:20px;background:#d3d6db;"></div>
<div style="left:489px;top:238px;width:1px;height:20px;background:#fff;"></div>
<div style="left:493px;top:236px;width:24px;height:24px;background:linear-gradient(#fde48a,#fbd55a);border:1px solid #e5b84a;border-radius:3px;"></div>
<svg style="left:498px;top:241px" width="14" height="14" viewBox="0 0 14 14"><rect x="0.500" y="0.500" width="13" height="13" fill="#fff" stroke="#5b8fc0"/><rect x="1" y="1" width="12" height="2.500" fill="#9fc3e6"/><path d="M2 5l4 3-4 3zM12 5l-4 3 4 3z" fill="#3f9a3f"/><path d="M7 4v9" stroke="#5b8fc0"/></svg>
<svg style="left:524px;top:241px" width="14" height="14" viewBox="0 0 14 14"><rect x="0.500" y="0.500" width="13" height="13" fill="#fff" stroke="#5b8fc0"/><rect x="1" y="1" width="12" height="2.500" fill="#9fc3e6"/><rect x="3" y="6" width="3" height="5" fill="#7fa8d2"/><rect x="7" y="6" width="2" height="5" fill="#7fa8d2"/><rect x="10" y="6" width="2" height="5" fill="#7fa8d2"/></svg>
<svg style="left:551px;top:242px" width="12" height="12" viewBox="0 0 12 12"><rect x="0.500" y="0.500" width="11" height="11" fill="#fff" stroke="#c0c6ce"/><rect x="2" y="2" width="2" height="2" fill="#3f6fb0"/><path d="M5 3h5" stroke="#7fa8d2"/><rect x="4" y="5" width="2" height="2" fill="#3f6fb0"/><path d="M7 6h3" stroke="#7fa8d2"/><rect x="4" y="8" width="2" height="2" fill="#3f6fb0"/><path d="M7 9h3" stroke="#7fa8d2"/></svg>
<div style="left:431px;top:266px;width:993px;height:1px;background:#a3a8b0;"></div>
<div style="left:432px;top:267px;width:991px;height:21px;background:linear-gradient(#fbfbfc,#eceef2);border-bottom:1px solid #b4b9c0;"></div>
<div style="left:447px;top:267px;width:1px;height:20px;background:#b4b9c0;"></div>
<div style="left:468px;top:267px;width:1px;height:20px;background:#b4b9c0;"></div>
<div style="left:469px;top:267px;width:1px;height:20px;background:#b4b9c0;"></div>
<div style="left:907px;top:267px;width:1px;height:20px;background:#b4b9c0;"></div>
<div style="left:1113px;top:267px;width:1px;height:20px;background:#b4b9c0;"></div>
<div style="left:1347px;top:267px;width:1px;height:20px;background:#b4b9c0;"></div>
<div style="left:432px;top:288px;width:991px;height:20px;background:#e2eaf4;"></div>
<div style="left:448px;top:308px;width:975px;height:1px;background:#d3dbe6;"></div>
<div style="left:468px;top:288px;width:1px;height:21px;background:#b4b9c0;"></div>
<div style="left:432px;top:288px;width:16px;height:21px;background:#f4f5f7;border-right:1px solid #b4b9c0;border-bottom:1px solid #b4b9c0;"></div>
<div style="left:1113px;top:288px;width:1px;height:20px;background:#eef3f9;"></div>
<div style="left:1347px;top:288px;width:1px;height:20px;background:#eef3f9;"></div>
<div style="left:469px;top:288px;width:1px;height:20px;background:#eef3f9;"></div>
<div style="left:452px;top:271px;width:13px;height:13px;background:#f3f3f3;border:1px solid #9aa0a8;box-shadow:inset 0 0 0 1px #fff, inset 0 0 0 2px #d8dadd;"></div>
<div style="left:452px;top:291px;width:13px;height:13px;background:#f3f3f3;border:1px solid #9aa0a8;box-shadow:inset 0 0 0 1px #fff, inset 0 0 0 2px #d8dadd;"></div>
<span class="t" style="left:472.7px;top:271px;letter-spacing:0.236px;color:#2a2d3a">Товар, код</span>
<span class="t" style="left:910.3px;top:271px;letter-spacing:0.148px;color:#2a2d3a">Количество</span>
<span class="t" style="left:1117px;top:271px;letter-spacing:-0.966px;color:#2a2d3a">Сумма</span>
<span class="t" style="left:1350.8px;top:271px;letter-spacing:0.162px;color:#2a2d3a">Материал,...</span>
<div style="left:470px;top:288px;width:437px;height:20px;background:#fff;"></div>
<div style="left:470px;top:288px;width:421px;height:21px;border:1px dotted #000;"></div>
<span class="t" style="left:473px;top:292px;letter-spacing:-0.115px;color:#000;">508. ламинированная бумага полуглянец - 210мм</span>
<div style="left:890px;top:288px;width:17px;height:20px;background:linear-gradient(#f8f9fa,#e4e7eb);border:1px solid #b4b9c0;"></div>
<svg style="left:894px;top:297px" width="10" height="2" viewBox="0 0 10 2"><rect x="0" y="0" width="2" height="2" fill="#444"/><rect x="4" y="0" width="2" height="2" fill="#444"/><rect x="8" y="0" width="2" height="2" fill="#444"/></svg>
<span class="t" style="left:1089.3px;top:292px;letter-spacing:0.231px;color:#000;">1,64</span>
<span class="t" style="left:1317.0px;top:292px;letter-spacing:0.119px;color:#000;">58,00</span>
<span class="t" style="left:1350.5px;top:292px;color:#000;">0</span>
<svg style="left:435px;top:292px" width="9" height="12" viewBox="0 0 9 12"><path d="M2.500 10l0.800-3 3-5.500 1.700 1-3 5.500z" fill="#fff" stroke="#777"/><path d="M6.500 11h2" stroke="#777"/></svg>
<div style="left:431px;top:764px;width:993px;height:1px;background:#a3a8b0;"></div>
<div style="left:431px;top:765px;width:993px;height:21px;background:linear-gradient(#f4f5f7,#eef0f3);"></div>
<div style="left:348px;top:336px;width:516px;height:25px;background:linear-gradient(#ffffff 10%,#e6e8f2);border:1px solid #80848c;border-radius:3px;box-shadow:2px 2px 3px rgba(0,0,0,0.35);"></div>
<span class="t" style="left:354px;top:343px;letter-spacing:0.078px;color:#2a2d3a">4111. сахар порционный стик 4г с логотипом клиента Шоколадница 22.04.2015 Печатный участок</span>
<span class="t" style="left:10.8px;top:802px;letter-spacing:-0.090px;color:#6e7686">Создан</span>
<svg style="left:51px;top:800px" width="164" height="16" viewBox="0 0 164 16"><rect x="20" y="0" width="4" height="4" fill="rgb(210,212,215)"/><rect x="80" y="0" width="4" height="4" fill="rgb(224,226,231)"/><rect x="88" y="0" width="4" height="4" fill="rgb(215,217,220)"/><rect x="136" y="0" width="4" height="4" fill="rgb(220,221,224)"/><rect x="0" y="4" width="4" height="4" fill="rgb(201,202,203)"/><rect x="4" y="4" width="4" height="4" fill="rgb(190,191,196)"/><rect x="8" y="4" width="4" height="4" fill="rgb(206,203,205)"/><rect x="12" y="4" width="4" height="4" fill="rgb(189,190,196)"/><rect x="16" y="4" width="4" height="4" fill="rgb(184,186,192)"/><rect x="20" y="4" width="4" height="4" fill="rgb(179,179,181)"/><rect x="24" y="4" width="4" height="4" fill="rgb(197,197,203)"/><rect x="28" y="4" width="4" height="4" fill="rgb(179,179,181)"/><rect x="32" y="4" width="4" height="4" fill="rgb(175,177,183)"/><rect x="36" y="4" width="4" height="4" fill="rgb(194,194,200)"/><rect x="40" y="4" width="4" height="4" fill="rgb(203,204,210)"/><rect x="48" y="4" width="4" height="4" fill="rgb(202,204,210)"/><rect x="52" y="4" width="4" height="4" fill="rgb(190,188,189)"/><rect x="56" y="4" width="4" height="4" fill="rgb(188,189,195)"/><rect x="60" y="4" width="4" height="4" fill="rgb(203,203,209)"/><rect x="64" y="4" width="4" height="4" fill="rgb(194,196,202)"/><rect x="68" y="4" width="4" height="4" fill="rgb(181,182,187)"/><rect x="72" y="4" width="4" height="4" fill="rgb(190,192,198)"/><rect x="76" y="4" width="4" height="4" fill="rgb(182,182,184)"/><rect x="80" y="4" width="4" height="4" fill="rgb(200,201,202)"/><rect x="84" y="4" width="4" height="4" fill="rgb(203,203,209)"/><rect x="88" y="4" width="4" height="4" fill="rgb(198,200,206)"/><rect x="92" y="4" width="4" height="4" fill="rgb(212,209,211)"/><rect x="96" y="4" width="4" height="4" fill="rgb(194,197,202)"/><rect x="104" y="4" width="4" height="4" fill="rgb(200,203,208)"/><rect x="108" y="4" width="4" height="4" fill="rgb(194,196,202)"/><rect x="112" y="4" width="4" height="4" fill="rgb(206,204,205)"/><rect x="116" y="4" width="4" height="4" fill="rgb(204,206,212)"/><rect x="120" y="4" width="4" height="4" fill="rgb(206,209,214)"/><rect x="124" y="4" width="4" height="4" fill="rgb(188,189,190)"/><rect x="128" y="4" width="4" height="4" fill="rgb(176,177,183)"/><rect x="132" y="4" width="4" height="4" fill="rgb(188,188,190)"/><rect x="136" y="4" width="4" height="4" fill="rgb(203,205,211)"/><rect x="140" y="4" width="4" height="4" fill="rgb(182,185,190)"/><rect x="144" y="4" width="4" height="4" fill="rgb(203,205,211)"/><rect x="148" y="4" width="4" height="4" fill="rgb(192,193,199)"/><rect x="152" y="4" width="4" height="4" fill="rgb(178,176,177)"/><rect x="156" y="4" width="4" height="4" fill="rgb(185,187,193)"/><rect x="160" y="4" width="4" height="4" fill="rgb(184,185,186)"/><rect x="0" y="8" width="4" height="4" fill="rgb(161,161,167)"/><rect x="4" y="8" width="4" height="4" fill="rgb(180,176,176)"/><rect x="8" y="8" width="4" height="4" fill="rgb(165,165,171)"/><rect x="12" y="8" width="4" height="4" fill="rgb(200,196,196)"/><rect x="16" y="8" width="4" height="4" fill="rgb(183,185,191)"/><rect x="20" y="8" width="4" height="4" fill="rgb(162,162,168)"/><rect x="24" y="8" width="4" height="4" fill="rgb(167,169,175)"/><rect x="28" y="8" width="4" height="4" fill="rgb(195,191,191)"/><rect x="32" y="8" width="4" height="4" fill="rgb(176,176,182)"/><rect x="36" y="8" width="4" height="4" fill="rgb(181,177,177)"/><rect x="40" y="8" width="4" height="4" fill="rgb(188,190,196)"/><rect x="48" y="8" width="4" height="4" fill="rgb(197,197,197)"/><rect x="52" y="8" width="4" height="4" fill="rgb(193,193,193)"/><rect x="56" y="8" width="4" height="4" fill="rgb(185,181,181)"/><rect x="60" y="8" width="4" height="4" fill="rgb(187,187,187)"/><rect x="64" y="8" width="4" height="4" fill="rgb(204,200,200)"/><rect x="68" y="8" width="4" height="4" fill="rgb(184,186,192)"/><rect x="72" y="8" width="4" height="4" fill="rgb(169,169,175)"/><rect x="76" y="8" width="4" height="4" fill="rgb(173,173,179)"/><rect x="80" y="8" width="4" height="4" fill="rgb(157,157,163)"/><rect x="84" y="8" width="4" height="4" fill="rgb(203,199,199)"/><rect x="88" y="8" width="4" height="4" fill="rgb(182,182,188)"/><rect x="92" y="8" width="4" height="4" fill="rgb(202,202,208)"/><rect x="96" y="8" width="4" height="4" fill="rgb(178,174,174)"/><rect x="104" y="8" width="4" height="4" fill="rgb(190,190,190)"/><rect x="108" y="8" width="4" height="4" fill="rgb(194,194,200)"/><rect x="112" y="8" width="4" height="4" fill="rgb(173,173,173)"/><rect x="116" y="8" width="4" height="4" fill="rgb(158,160,166)"/><rect x="120" y="8" width="4" height="4" fill="rgb(162,162,168)"/><rect x="124" y="8" width="4" height="4" fill="rgb(205,207,213)"/><rect x="128" y="8" width="4" height="4" fill="rgb(163,163,169)"/><rect x="132" y="8" width="4" height="4" fill="rgb(193,193,193)"/><rect x="136" y="8" width="4" height="4" fill="rgb(176,172,172)"/><rect x="140" y="8" width="4" height="4" fill="rgb(190,190,190)"/><rect x="144" y="8" width="4" height="4" fill="rgb(175,175,181)"/><rect x="148" y="8" width="4" height="4" fill="rgb(208,204,204)"/><rect x="152" y="8" width="4" height="4" fill="rgb(158,158,164)"/><rect x="156" y="8" width="4" height="4" fill="rgb(157,157,163)"/><rect x="160" y="8" width="4" height="4" fill="rgb(186,188,194)"/><rect x="4" y="12" width="4" height="4" fill="rgb(220,222,226)"/><rect x="24" y="12" width="4" height="4" fill="rgb(222,224,229)"/><rect x="36" y="12" width="4" height="4" fill="rgb(216,218,223)"/><rect x="112" y="12" width="4" height="4" fill="rgb(221,222,226)"/><rect x="148" y="12" width="4" height="4" fill="rgb(225,227,231)"/></svg>
<span class="t" style="left:215.5px;top:802px;letter-spacing:0.131px;color:#6e7686">, 06.10.2015 9:53:03</span>
<span class="t" style="left:326.7px;top:802px;letter-spacing:-0.216px;color:#2a2d3a">Примечания:</span>
<div class="in" style="left:394px;top:798px;width:1035px;height:20px;"></div>
<div style="left:0px;top:827px;width:1440px;height:2px;background:#eef0f3;"></div>
<div style="left:0px;top:829px;width:1440px;height:1px;background:#9aa0a8;"></div>
<div style="left:0px;top:830px;width:1440px;height:30px;background:linear-gradient(#e4e7ea 0%,#d0d3d8 45%,#bfc3c8 100%);"></div>
<div style="left:0px;top:830px;width:1440px;height:1px;background:#f1f3f5;"></div>
<span class="t" style="left:5.6px;top:839px;letter-spacing:0.013px;color:#2a2d3a">Окна</span>
<svg style="left:36px;top:845px" width="6" height="3" viewBox="0 0 6 3"><path d="M0 0h6l-3.0 3z" fill="#5a5f67"/></svg>
<div style="left:1371px;top:834px;width:1px;height:22px;background:#b0b4ba;"></div>
<div style="left:1372px;top:834px;width:1px;height:22px;background:#eef0f2;"></div>
<svg style="left:1380px;top:840px" width="16" height="11" viewBox="0 0 16 11"><rect x="0.500" y="0.500" width="15" height="10" rx="1" fill="#fff" stroke="#9aa0a8"/><path d="M1 1l7 5.500 7-5.500M1 10l5-4.500M15 10l-5-4.500" fill="none" stroke="#b4c4dc"/></svg>
<svg style="left:1407px;top:838px" width="15" height="14" viewBox="0 0 15 14"><path d="M7.500 1l6.500 12h-13z" fill="#fbbf3a" stroke="#e09a1a"/><path d="M7.500 5v4.500" stroke="#fff" stroke-width="1.600"/><rect x="6.700" y="10.500" width="1.600" height="1.600" fill="#fff"/></svg>
<span class="t" style="left:1428px;top:839px;color:#2a2d3a">1</span>
</div>
</body></html>
